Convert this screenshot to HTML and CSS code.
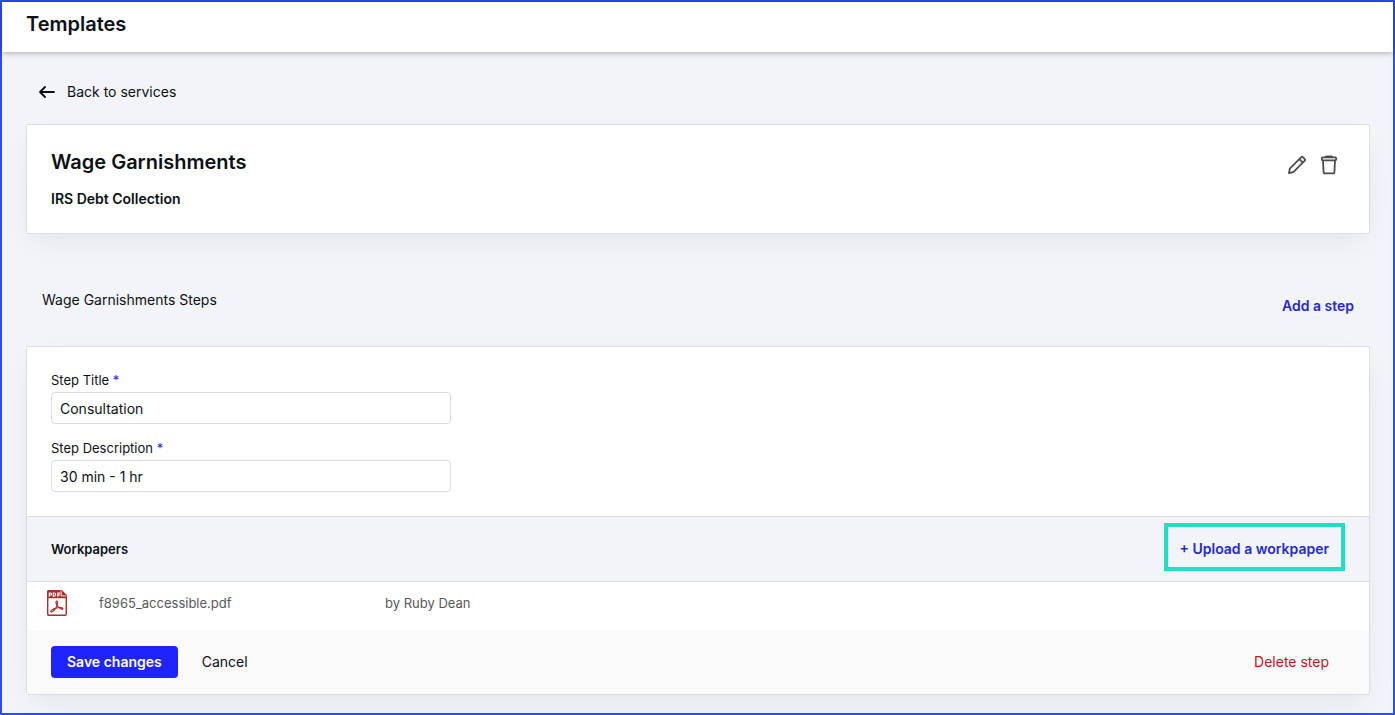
FILE: index.html
```
<!DOCTYPE html>
<html lang="en">
  <head>
    <meta charset="UTF-8" />
    <meta name="viewport" content="width=device-width, initial-scale=1.0" />
    <link rel="stylesheet" href="styles.css">
    <title>Templates</title>
  </head>
  <body>
    <div class="page">
      <header class="topbar">
        <h1>Templates</h1>
      </header>

      <main class="content">
        <a class="back" href="#services">
          <svg width="16" height="12" viewBox="0 0 16 12" fill="none" stroke="currentColor" stroke-width="1.8" stroke-linecap="round" stroke-linejoin="round">
            <path d="M15 6H1M6 1 1 6l5 5" />
          </svg>
          Back to services
        </a>

        <section class="card service">
          <div>
            <h2>Wage Garnishments</h2>
            <p>IRS Debt Collection</p>
          </div>
          <div class="actions">
            <button type="button" aria-label="Edit service">
              <svg width="20" height="20" viewBox="0 0 20 20" fill="none" stroke="currentColor" stroke-width="1.8" stroke-linejoin="round">
                <path d="M2 18l.8-4.300L14.300 2.200q.8-.8 1.600 0l1.900 1.900q.8.8 0 1.600L6.300 17.200 2 18z" />
                <path d="M12.300 4.200l3.500 3.500" />
              </svg>
            </button>
            <button type="button" aria-label="Delete service">
              <svg width="20" height="20" viewBox="0 0 20 20" fill="none" stroke="currentColor" stroke-width="1.8" stroke-linejoin="round">
                <path d="M6.500 2.200q.4-.8 1.200-.8h4.600q.8 0 1.200.8" />
                <rect x="2.800" y="2.300" width="14.400" height="3" rx="1" />
                <path d="M4 5.300l.6 12q.1 1.100 1.200 1.100h8.400q1.100 0 1.200-1.100l.6-12" />
              </svg>
            </button>
          </div>
        </section>

        <div class="steps-header">
          <p>Wage Garnishments Steps</p>
          <button type="button" class="link">Add a step</button>
        </div>

        <form class="card step">
          <div class="fields">
            <div class="field">
              <label for="step-title">Step Title <span>*</span></label>
              <input type="text" id="step-title" value="Consultation" />
            </div>
            <div class="field">
              <label for="step-description">Step Description <span>*</span></label>
              <input type="text" id="step-description" value="30 min - 1 hr" />
            </div>
          </div>

          <!-- workpapers -->
          <div class="workpapers">
            <h3>Workpapers</h3>
            <button type="button" class="link upload">+ Upload a workpaper</button>
          </div>
          <div class="file">
            <svg width="20" height="26" viewBox="0 0 20 26" fill="none" stroke="#a3302b">
              <path d="M1.500 .7H14.500L19.300 5.500V24q0 1.300-1.300 1.300H2Q.7 25.300 .7 24V1.500Q.7 .7 1.500 .7z" fill="#fff" stroke-width="1.400" />
              <path d="M.7 8.300V1.500Q.7 .7 1.500 .7H14.500V5.500h4.800v2.800z" fill="#a3302b" stroke="none" />
              <path d="M14 .5V6h5.500" stroke="#fff" stroke-width=".7" />
              <path d="M15 .7v4.500h4.500z" fill="#a3302b" stroke="none" />
              <g stroke="#fff" stroke-width="1.100">
                <path d="M2.300 6.700V3h1.300q1.100 0 1.100 1t-1.100 1H2.300" />
                <path d="M6.300 3v3.200h.8q1.600 0 1.600-1.600T7.100 3z" />
                <path d="M10.800 6.700V3h2.400M10.800 4.900h2" />
              </g>
              <path d="M9.300 11.200c1.500-.5 1.600 1.500.7 4.200-1.200 3.500-4 6.700-5.600 6.600-1.800-.2.200-2.700 4.600-3.900 3.500-1 7.300-.8 6.900.7-.4 1.300-3.700-.2-5.600-3.200-1.300-2-1.900-4.100-1-4.400z" stroke-width="1.200" />
            </svg>
            <span class="file-name">f8965_accessible.pdf</span>
            <span>by Ruby Dean</span>
          </div>

          <div class="footer">
            <button type="submit" class="save">Save changes</button>
            <button type="button" class="cancel">Cancel</button>
            <button type="button" class="delete">Delete step</button>
          </div>
        </form>
      </main>
    </div>
  </body>
</html>
```
FILE: styles.css
```
* {
  box-sizing: border-box;
}

body {
  margin: 0;
  font-family: Inter, "Liberation Sans", sans-serif;
  font-size: 14px;
  line-height: 20px;
  color: #0b1016;
}

h1, h2, h3, p {
  margin: 0;
}

button {
  padding: 0;
  border: none;
  background: none;
  font: inherit;
  color: inherit;
  cursor: pointer;
}

svg {
  display: block;
  flex-shrink: 0;
}

.page {
  min-height: 100vh;
  border: 2px solid #2f4cf0;
  background-color: #f3f4f8;
}

.topbar {
  height: 50px;
  padding: 8px 24px;
  background-color: #fff;
  box-shadow: 0 1px 6px rgba(0, 0, 0, 0.3);
}

.topbar h1 {
  font-size: 20px;
  font-weight: 600;
  line-height: 28px;
}

.content {
  padding: 30px 23px 18px 24px;
}

.back {
  display: flex;
  align-items: center;
  gap: 12px;
  width: fit-content;
  margin-left: 13px;
  color: inherit;
  text-decoration: none;
}

.card {
  background-color: #fff;
  border: 1px solid #dcdde0;
  border-radius: 2px;
  box-shadow: 0 12px 32px -8px rgba(30, 30, 60, 0.08);
}

.service {
  display: flex;
  justify-content: space-between;
  align-items: flex-start;
  margin-top: 22px;
  padding: 24px;
}

.service h2 {
  font-size: 20px;
  font-weight: 600;
  line-height: 26px;
}

.service p {
  margin-top: 14px;
  font-weight: 600;
}

.actions {
  display: flex;
  gap: 12px;
  padding: 6px;
  color: #4c4c50;
}

.steps-header {
  display: flex;
  justify-content: space-between;
  margin: 56px 16px 30px;
}

.steps-header .link {
  margin-top: 6px;
}

.link {
  font-weight: 600;
  color: #2429d0;
}

.fields {
  display: flex;
  flex-direction: column;
  gap: 15px;
  padding: 24px;
}

.field {
  display: flex;
  flex-direction: column;
  gap: 3px;
  width: 400px;
  max-width: 100%;
}

.field label {
  font-size: 13px;
  line-height: 18px;
}

.field label span {
  color: #2429d0;
}

.field input {
  height: 32px;
  padding: 0 8px;
  border: 1px solid #dcdde0;
  border-radius: 4px;
  background-color: #fff;
  font: inherit;
  color: inherit;
}

.workpapers {
  display: flex;
  justify-content: space-between;
  align-items: baseline;
  padding: 6px 24px 10px;
  border-top: 1px solid #dcdde0;
  border-bottom: 1px solid #dcdde0;
  background-color: #f3f4f8;
}

.workpapers h3 {
  font-size: 13px;
  font-weight: 600;
}

.upload {
  padding: 12px 12px 8px;
  border: 4px solid #1fe0c4;
}

.file {
  display: flex;
  align-items: center;
  height: 48px;
  padding: 0 20px 6px;
  font-size: 13px;
  color: #58585c;
}

.file-name {
  width: 286px;
  margin-left: 32px;
}

.footer {
  display: flex;
  align-items: center;
  gap: 24px;
  padding: 16px 40px 16px 24px;
  background-color: #fafafa;
}

.save {
  height: 32px;
  padding: 0 16px;
  border-radius: 4px;
  background-color: #1f24ff;
  font-weight: 600;
  color: #fff;
}

.delete {
  margin-left: auto;
  color: #c5161d;
}
```
